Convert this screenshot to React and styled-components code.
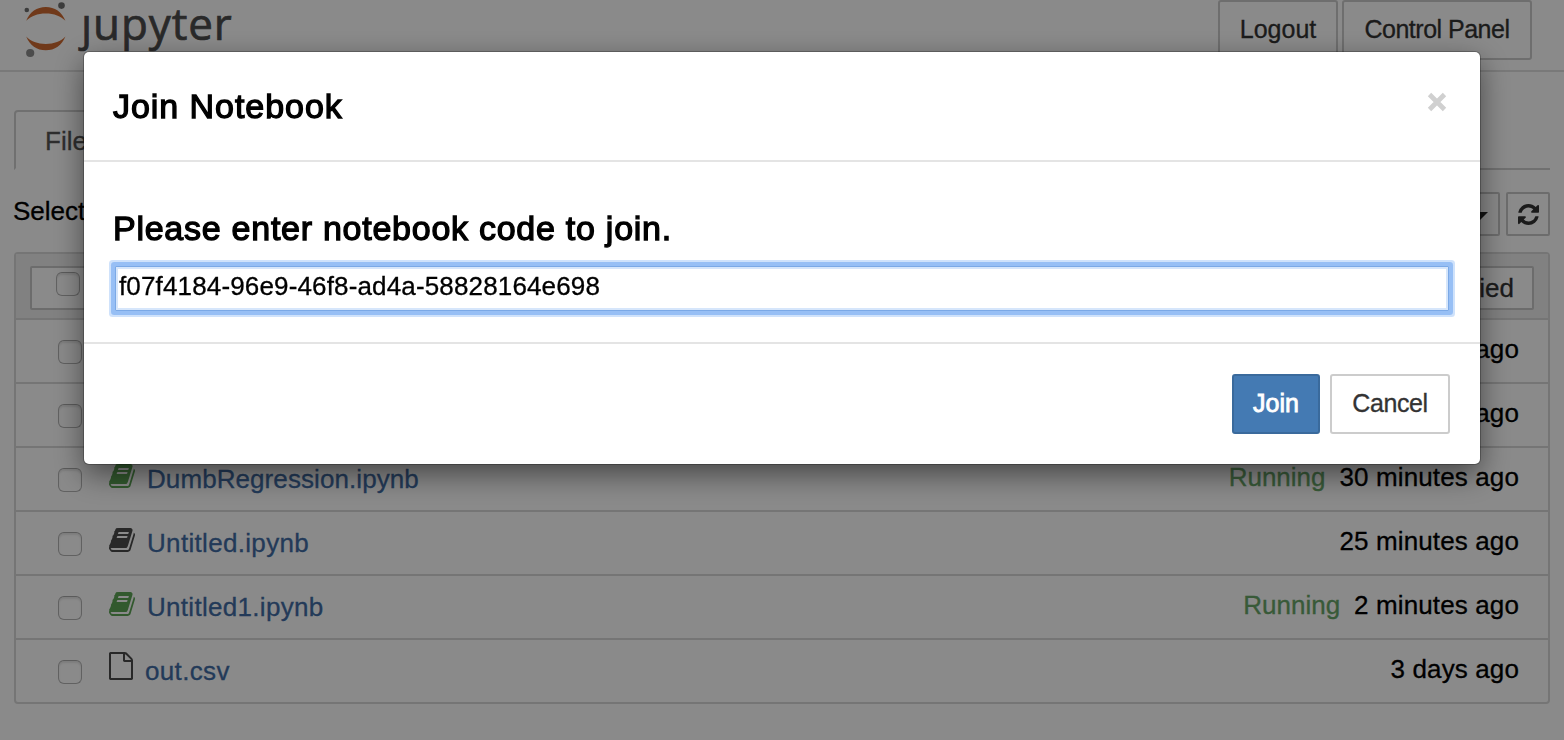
import React from "react";
import styled, { createGlobalStyle } from "styled-components";

const GlobalStyle = createGlobalStyle`
  * { box-sizing: border-box; }
  html, body { margin: 0; padding: 0; }
  body {
    background: #fff;
    color: #000;
    font-family: "Liberation Sans", Arial, sans-serif;
    font-size: 26px;
    line-height: 36px;
    overflow: hidden;
    -webkit-text-stroke: 0.3px currentColor;
  }
`;

const Page = styled.div`
  height: 740px;
  overflow: hidden;
`;

const Header = styled.header`
  display: flex;
  justify-content: space-between;
  align-items: flex-start;
  height: 72px;
  padding: 0 32px 0 23px;
  border-bottom: 2px solid #e0e0e0;
`;

const Brand = styled.div`
  display: flex;
  align-items: flex-start;
`;

const LogoMark = styled.svg`
  width: 46px;
  height: 58px;
`;

const Wordmark = styled.span`
  margin: -10px 0 0 12px;
  font-family: "Open Sans", sans-serif;
  font-size: 44px;
  line-height: 66px;
  letter-spacing: 0.9px;
  color: #4c4c4c;
  -webkit-text-stroke: 0.7px #4c4c4c;
  clip-path: polygon(-10px 24px, 16px 24px, 16px 0, 100% 0, 100% 100%, -10px 100%);
`;

const HeaderActions = styled.div`
  display: flex;
  gap: 4px;
`;

const Button = styled.button`
  width: ${(p) => p.$width}px;
  height: 60px;
  padding: 0 0 1px;
  border: 2px solid ${(p) => (p.$primary ? "#3a6a9c" : "#ccc")};
  border-radius: 3px;
  background: ${(p) => (p.$primary ? "#447ab3" : "#fff")};
  color: ${(p) => (p.$primary ? "#fff" : "#333")};
  font: 25px "Liberation Sans", Arial, sans-serif;
  letter-spacing: ${(p) => p.$tracking || 0}px;
  -webkit-text-stroke: ${(p) => (p.$primary ? "0.8px #fff" : "0.3px #333")};
`;

const TabBar = styled.nav`
  display: flex;
  margin: 38px 14px 0;
  height: 60px;
  border-bottom: 2px solid #cfcfcf;
`;

const Tab = styled.div`
  height: 60px;
  padding: 11px 30px 0 29px;
  border: 2px solid #cfcfcf;
  border-bottom-color: #fff;
  border-radius: 4px 4px 0 0;
  background: #fff;
  color: #555;
`;

const Toolbar = styled.div`
  display: flex;
  justify-content: space-between;
  margin: 22px 14px 0 13px;
  height: 44px;
`;

const ToolbarLabel = styled.span`
  padding-top: 1px;
`;

const ToolbarGroup = styled.div`
  display: flex;
  gap: 6px;
`;

const SmallButton = styled.div`
  display: flex;
  align-items: center;
  justify-content: ${(p) => (p.$end ? "flex-end" : "center")};
  width: ${(p) => p.$width}px;
  height: 44px;
  padding-right: ${(p) => (p.$end ? p.$end : 0)}px;
  border: 2px solid #c8c8c8;
  border-radius: 2px;
  background: #fff;
  color: #333;
`;

const Caret = styled.span`
  border: 8px solid transparent;
  border-top-color: #222;
  border-bottom: 0;
  margin-top: 3px;
`;

const List = styled.section`
  margin: 16px 14px 0;
  border: 2px solid #d8d8d8;
  border-radius: 4px;
`;

const ListHeader = styled.div`
  display: flex;
  justify-content: space-between;
  align-items: flex-start;
  height: 64px;
  padding: 12px 14px;
  background: #eee;
`;

const SelectAll = styled.div`
  display: flex;
  width: 110px;
  height: 44px;
  padding: 4px 0 0 24px;
  border: 2px solid #c8c8c8;
  border-radius: 2px;
  background: #fff;
`;

const Checkbox = styled.span`
  flex: none;
  width: 24px;
  height: 24px;
  border: 1.5px solid #b4b4b4;
  border-top-color: #a8a8a8;
  border-radius: 6px;
  background: #fff;
  box-shadow: inset 0 2px 2px #e6e6e6;
`;

const Row = styled.div`
  display: flex;
  height: 64px;
  padding: 20px 29px 0 42px;
  border-top: 2px solid #d8d8d8;
`;

const IconSlot = styled.span`
  display: flex;
  flex: none;
  width: ${(p) => (p.$file ? 36 : 38)}px;
  margin: ${(p) => (p.$file ? -8 : -4)}px 0 0 27px;
  color: ${(p) => (p.$running ? "#5da556" : "#4a4a4a")};
`;

const FileName = styled.a`
  flex: 1;
  margin-top: -7px;
  color: #416ca4;
  letter-spacing: ${(p) => p.$tracking}px;
`;

const Meta = styled.span`
  display: flex;
  gap: 14px;
  margin: -9px 0 0 auto;
  letter-spacing: 0.12px;
`;

const Running = styled.span`
  color: #68a668;
  letter-spacing: 0;
`;

const Backdrop = styled.div`
  position: fixed;
  inset: 0;
  padding: 52px 84px;
  background: rgba(0, 0, 0, 0.46);
`;

const Dialog = styled.div`
  width: 1396px;
  height: 412px;
  border-radius: 5px;
  background: #fff;
  box-shadow: 0 0 0 1px rgba(0, 0, 0, 0.25), 0 10px 30px rgba(0, 0, 0, 0.5);
`;

const DialogHeader = styled.div`
  display: flex;
  justify-content: space-between;
  height: 110px;
  padding: 35px 33px 0 29px;
  border-bottom: 2px solid #e4e4e4;
`;

const Heading = styled.h4`
  margin: 0;
  font-size: 34px;
  font-weight: 400;
  line-height: 38px;
  letter-spacing: ${(p) => p.$tracking}px;
  -webkit-text-stroke: 1.3px #000;
`;

const CloseIcon = styled.svg`
  width: 20px;
  height: 20px;
  margin-top: 5px;
`;

const DialogBody = styled.div`
  height: 182px;
  padding: 47px 28px 0 29px;
  border-bottom: 2px solid #e4e4e4;
`;

const CodeInput = styled.input`
  display: block;
  width: 1334px;
  height: 45px;
  margin: 19px 0 0 2px;
  padding: 0 0 4px 3px;
  border: 1px solid #7ba9e6;
  border-radius: 1px;
  outline: none;
  background: #fff;
  color: #000;
  font: 26px "Liberation Sans", Arial, sans-serif;
  letter-spacing: 0.15px;
  -webkit-text-stroke: 0.3px #000;
  box-shadow: inset 0 0 0 2px #d6e6fb, 0 0 0 4px #97bff5, 0 0 0 6px #cfe2fb;
`;

const DialogFooter = styled.div`
  display: flex;
  justify-content: flex-end;
  gap: 10px;
  padding: 30px 30px 0;
`;

function BookIcon() {
  return (
    <svg width="26" height="24" viewBox="0 128 1664 1536" fill="currentColor">
      <path d="M1639 478q40 57 18 129l-275 906q-19 64-76.5 107.5t-122.5 43.5h-923q-77 0-148.5-53.5t-99.5-131.5q-24-67-2-127 0-4 3-27t4-37q1-8-3-21.5t-3-19.5q2-11 8-21t16.5-23.5 16.5-23.5q23-38 45-91.5t30-91.5q3-10 .5-30t-.5-28q3-11 17-28t17-23q21-36 42-92t25-90q1-9-2.5-32t.5-28q4-13 22-30.5t22-22.5q19-26 42.5-84.5t27.5-96.5q1-8-3-25.5t-2-26.5q2-8 9-18t18-23 17-21q8-12 16.5-30.5t15-35 16-36 19.5-32 26.5-23.5 36-11.5 47.5 5.5l-1 3q38-9 51-9h761q74 0 114 56t18 130l-274 906q-36 119-71.5 153.5t-128.5 34.5h-869q-27 0-38 15-11 16-1 43 24 70 144 70h923q29 0 56-15.5t35-41.5l300-987q7-22 5-57 38 15 59 43zm-1064 2q-4 13 2 22.5t20 9.5h608q13 0 25.5-9.5t16.5-22.5l21-64q4-13-2-22.5t-20-9.5h-608q-13 0-25.5 9.5t-16.5 22.5zm-83 256q-4 13 2 22.5t20 9.5h608q13 0 25.5-9.5t16.5-22.5l21-64q4-13-2-22.5t-20-9.5h-608q-13 0-25.5 9.5t-16.5 22.5z" />
    </svg>
  );
}

function FileIcon() {
  return (
    <svg width="24" height="28" viewBox="128 0 1536 1792" fill="currentColor">
      <path d="M1596 380q28 28 48 76t20 88v1152q0 40-28 68t-68 28h-1344q-40 0-68-28t-28-68v-1600q0-40 28-68t68-28h896q40 0 88 20t76 48zm-444-244v376h376q-10-29-22-41l-313-313q-12-12-41-22zm384 1528v-1024h-416q-40 0-68-28t-28-68v-416h-768v1536h1280z" />
    </svg>
  );
}

function RefreshIcon() {
  return (
    <svg width="21" height="21" viewBox="128 128 1536 1536" fill="currentColor">
      <path d="M1639 1056q0 5-1 7-64 268-268 434.5t-478 166.5q-146 0-282.5-55t-243.5-157l-129 129q-19 19-45 19t-45-19-19-45v-448q0-26 19-45t45-19h448q26 0 45 19t19 45-19 45l-137 137q71 66 161 102t187 36q134 0 250-65t186-179q11-17 53-117 8-23 30-23h192q13 0 22.5 9.5t9.5 22.5zm25-800v448q0 26-19 45t-45 19h-448q-26 0-45-19t-19-45 19-45l138-138q-148-137-349-137-134 0-250 65t-186 179q-11 17-53 117-8 23-30 23h-199q-13 0-22.5-9.5t-9.5-22.5v-7q65-268 270-434.500t480-166.500q146 0 284 55.500t245 156.500l130-129q19-19 45-19t45 19 19 45z" />
    </svg>
  );
}

function JupyterMark() {
  return (
    <LogoMark viewBox="0 0 46 58">
      <path d="M3.2 20.8C6.5 12 14 7 22.8 7s16.3 5 19.6 13.8C38 16 31 13.400 22.800 13.400S7.600 16 3.200 20.800z" fill="#cf6a30" />
      <path d="M3.200 36.500C6.500 45.300 14 50.300 22.800 50.300s16.300-5 19.600-13.800C38 41.300 31 43.900 22.800 43.900S7.600 41.300 3.200 36.500z" fill="#cf6a30" />
      <circle cx="38.500" cy="5.600" r="3.300" fill="#707070" />
      <circle cx="3.800" cy="10" r="2.300" fill="#707070" />
      <circle cx="7.200" cy="53" r="4.100" fill="#8c8c8c" />
    </LogoMark>
  );
}

const files = [
  { modified: "ago" },
  { modified: "ago" },
  { name: "DumbRegression.ipynb", modified: "30 minutes ago", running: true, tracking: 0.08 },
  { name: "Untitled.ipynb", modified: "25 minutes ago", tracking: 0.32 },
  { name: "Untitled1.ipynb", modified: "2 minutes ago", running: true, tracking: 0.3 },
  { name: "out.csv", modified: "3 days ago", file: true, tracking: 0.35 },
];

export default function App() {
  return (
    <>
      <GlobalStyle />
      <Page>
        <Header>
          <Brand>
            <JupyterMark />
            <Wordmark>jupyter</Wordmark>
          </Brand>
          <HeaderActions>
            <Button $width={120}>Logout</Button>
            <Button $width={190} $tracking={-0.5}>Control Panel</Button>
          </HeaderActions>
        </Header>
        <TabBar>
          <Tab>Files</Tab>
        </TabBar>
        <Toolbar>
          <ToolbarLabel>Select</ToolbarLabel>
          <ToolbarGroup>
            <SmallButton $width={90} $end={10}>
              <Caret />
            </SmallButton>
            <SmallButton $width={44}>
              <RefreshIcon />
            </SmallButton>
          </ToolbarGroup>
        </Toolbar>
        <List>
          <ListHeader>
            <SelectAll>
              <Checkbox />
            </SelectAll>
            <SmallButton $width={200} $end={18}>Last Modified</SmallButton>
          </ListHeader>
          {files.map((f, i) => (
            <Row key={i}>
              <Checkbox />
              {f.name && (
                <>
                  <IconSlot $running={f.running} $file={f.file}>
                    {f.file ? <FileIcon /> : <BookIcon />}
                  </IconSlot>
                  <FileName $tracking={f.tracking}>{f.name}</FileName>
                </>
              )}
              <Meta>
                {f.running && <Running>Running</Running>}
                <span>{f.modified}</span>
              </Meta>
            </Row>
          ))}
        </List>
      </Page>
      <Backdrop>
        <Dialog role="dialog">
          <DialogHeader>
            <Heading $tracking={0.95}>Join Notebook</Heading>
            <CloseIcon viewBox="0 0 20 20">
              <path d="M2.500 2.500L17.500 17.500M17.500 2.500L2.500 17.500" stroke="#d0d0d0" strokeWidth="4.800" />
            </CloseIcon>
          </DialogHeader>
          <DialogBody>
            <Heading $tracking={0.74}>Please enter notebook code to join.</Heading>
            <CodeInput defaultValue="f07f4184-96e9-46f8-ad4a-58828164e698" />
          </DialogBody>
          <DialogFooter>
            <Button $primary $width={88}>Join</Button>
            <Button $width={120} $tracking={-0.4}>Cancel</Button>
          </DialogFooter>
        </Dialog>
      </Backdrop>
    </>
  );
}
